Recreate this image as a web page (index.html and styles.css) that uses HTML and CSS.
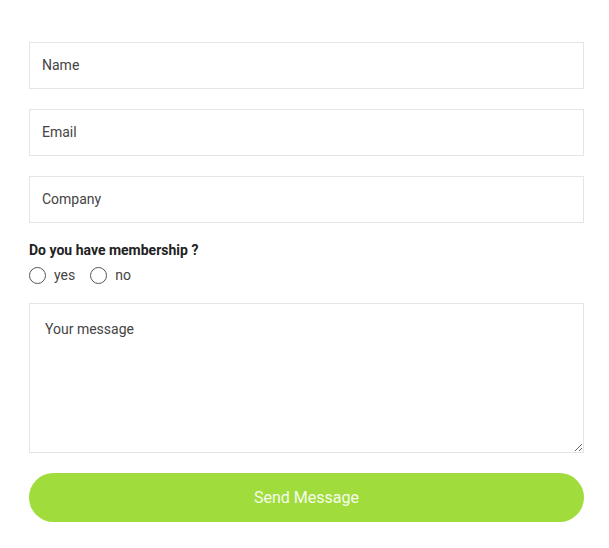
FILE: index.html
```html
<!DOCTYPE html>
<html>
<head>
<meta charset="utf-8">
<link rel="stylesheet" href="styles.css">
</head>
<body>
<form class="form">
  <input class="field" type="text" placeholder="Name">
  <input class="field" type="text" placeholder="Email">
  <input class="field" type="text" placeholder="Company">
  <div class="member">
    <div class="member-label">Do you have membership ?</div>
    <div class="radios">
      <label class="radio"><span class="circle"></span>yes</label>
      <label class="radio"><span class="circle"></span>no</label>
    </div>
  </div>
  <textarea class="message" placeholder="Your message"></textarea>
  <button class="send" type="button">Send Message</button>
</form>
</body>
</html>
```
FILE: styles.css
```css
html, body {
  margin: 0;
  padding: 0;
  background: #fff;
}
body {
  font-family: Roboto, "Liberation Sans", sans-serif;
}
.form {
  display: flex;
  flex-direction: column;
  padding: 42px 25px 0 29px;
}
.field {
  box-sizing: border-box;
  height: 47px;
  border: 1px solid #e5e5e5;
  padding: 0 12px 2px 12px;
  font-family: Roboto, sans-serif;
  font-size: 14px;
  color: #444;
  margin: 0 0 20px 0;
  outline: none;
}
.field::placeholder, .message::placeholder {
  color: #444;
  opacity: 1;
}
.member {
  margin-top: -1px;
  display: flex;
  flex-direction: column;
}
.member-label {
  font-size: 14px;
  font-weight: 700;
  color: #222;
  line-height: 16px;
}
.radios {
  display: flex;
  gap: 15px;
  margin-top: 9px;
  height: 16px;
  align-items: center;
}
.radio {
  display: flex;
  align-items: center;
  font-size: 14px;
  color: #444;
  gap: 8px;
}
.circle {
  box-sizing: border-box;
  width: 17px;
  height: 17px;
  border: 1.5px solid #555;
  border-radius: 50%;
}
.message {
  box-sizing: border-box;
  margin-top: 20px;
  height: 150px;
  border: 1px solid #e5e5e5;
  padding: 17px 15px;
  font-family: Roboto, sans-serif;
  font-size: 14px;
  color: #444;
  resize: vertical;
  outline: none;
}
.send {
  margin-top: 20px;
  height: 49px;
  border: none;
  border-radius: 25px;
  background: #a0dd3c;
  color: #f6fcec;
  font-family: Roboto, sans-serif;
  font-size: 16px;
}
```
